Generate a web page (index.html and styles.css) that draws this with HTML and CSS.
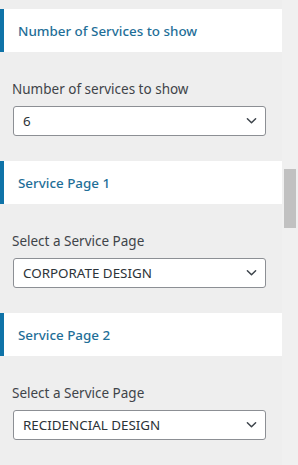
FILE: index.html
```html
<!DOCTYPE html>
<html lang="en">
<head>
    <meta charset="UTF-8" />
    <meta name="viewport" content="width=device-width, initial-scale=1.0" />
    <title>Customize services</title>
    <link rel="stylesheet" href="styles.css">
</head>
<body>
    <div class="frame">
        <div class="panel">
            <div class="section">
                <h3 class="section-title">Number of Services to show</h3>
                <div class="control">
                    <label class="control-label">Number of services to show</label>
                    <div class="select">
                        <span>6</span>
                        <svg class="chevron" viewBox="0 0 12 8"><path d="M1.5 1.5l4.5 4.5 4.5-4.5" /></svg>
                    </div>
                </div>
            </div>

            <div class="section">
                <h3 class="section-title">Service Page 1</h3>
                <div class="control">
                    <label class="control-label">Select a Service Page</label>
                    <div class="select">
                        <span>CORPORATE DESIGN</span>
                        <svg class="chevron" viewBox="0 0 12 8"><path d="M1.5 1.5l4.5 4.5 4.5-4.5" /></svg>
                    </div>
                </div>
            </div>

            <div class="section">
                <h3 class="section-title">Service Page 2</h3>
                <div class="control">
                    <label class="control-label">Select a Service Page</label>
                    <div class="select">
                        <span>RECIDENCIAL DESIGN</span>
                        <svg class="chevron" viewBox="0 0 12 8"><path d="M1.5 1.5l4.5 4.5 4.5-4.5" /></svg>
                    </div>
                </div>
            </div>
        </div>

        <!-- scrollbar -->
        <div class="scroll-track">
            <div class="scroll-thumb"></div>
        </div>
    </div>
</body>
</html>
```

FILE: styles.css
```css
body {
    margin: 0;
    padding: 0;
    background: #eeeeee;
    font-family: "Noto Sans", "Open Sans", sans-serif;
}

.frame {
    display: flex;
    height: 465px;
    overflow: hidden;
}

.panel {
    width: 282px;
    padding-top: 9px;
}

.section {
    margin-bottom: 25px;
}

.section-title {
    margin: 0;
    height: 43px;
    display: flex;
    align-items: center;
    padding-left: 14px;
    background: #ffffff;
    border-left: 4px solid #0f73a8;
    font-size: 13.4px;
    font-weight: 500;
    color: #1f6f98;
}

.control {
    padding: 28px 0 0 13px;
}

.control-label {
    display: block;
    font-size: 13.5px;
    color: #3f4449;
    margin-bottom: 8px;
    margin-left: -1px;
}

.select {
    height: 28px;
    border: 1px solid #8c8f94;
    border-radius: 3px;
    background: #ffffff;
    display: flex;
    align-items: center;
    justify-content: space-between;
    padding: 0 8px 0 9px;
    box-sizing: content-box;
    width: 234px;
    font-size: 13.4px;
    color: #2c3338;
}

.chevron {
    width: 11px;
    height: 8px;
    fill: none;
    stroke: #3c434a;
    stroke-width: 1.6;
    stroke-linecap: round;
    stroke-linejoin: round;
}

.scroll-track {
    width: 16px;
    background: #f0f0f0;
}

.scroll-thumb {
    margin: 169px 2px 0 2px;
    height: 59px;
    background: #c1c1c1;
}
```
